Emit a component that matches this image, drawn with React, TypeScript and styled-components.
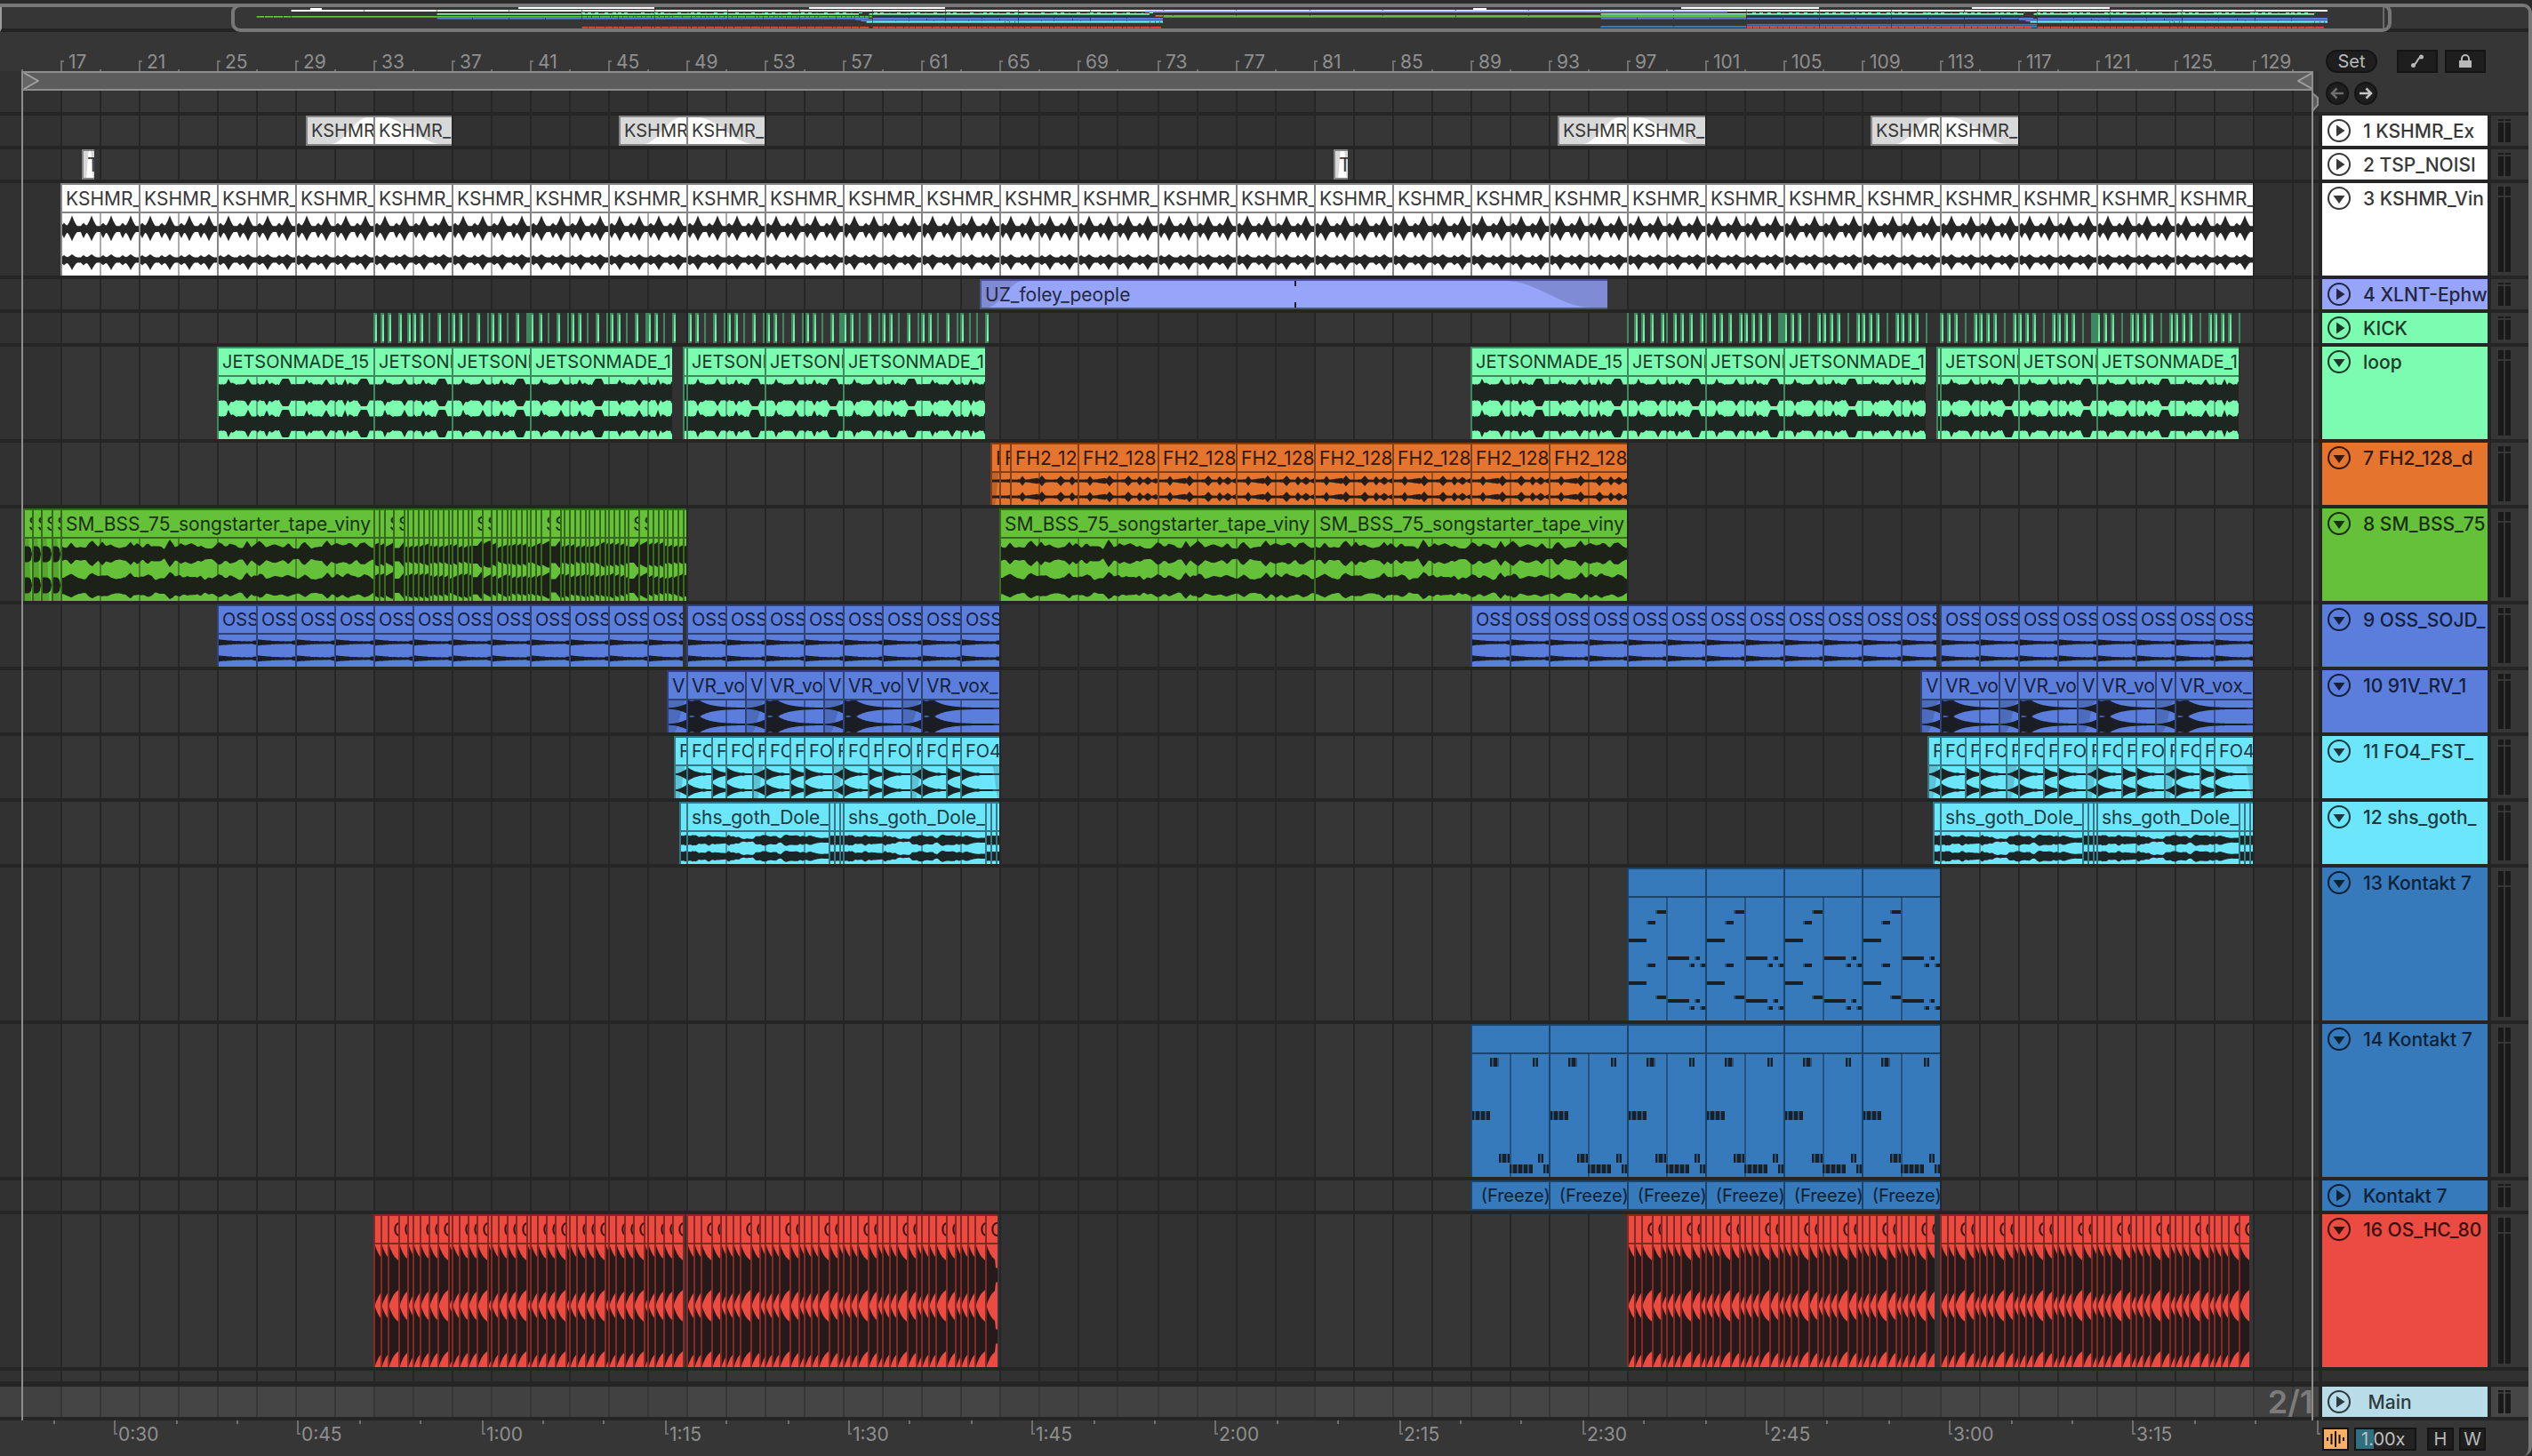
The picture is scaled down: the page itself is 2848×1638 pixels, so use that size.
import React from 'react';
import styled, { createGlobalStyle } from 'styled-components';

/* ---------- timeline scale ---------- */

const REPEAT = 1410;
const bar = (n: number) => 2 * Math.round((420 + (n - 33) * 22.025) / 2);
const range = (from: number, to: number, step: number) => {
  const out: number[] = [];
  for (let n = from; n <= to; n += step) out.push(n);
  return out;
};

/* ---------- types ---------- */

type Env = (x: number, ch: number, w: number, start: number) => [number, number];
type Fade = { in?: [number, number]; out?: [number, number] };
type Note = [number, number, number];
type ClipData = { x: number; end: number; name?: string; env?: Env; fade?: Fade; notes?: Note[] };
type Palette = { fill: string; edge: string; text: string; wave: string };
type TrackData = {
  name: string;
  height: number;
  folded?: boolean;
  compact?: boolean;
  color: Palette;
  clips: ClipData[];
  hits?: Hit[];
};
type Hit = { x: number; kind: 'hit' | 'mute' | 'wide' };

/* ---------- palettes ---------- */

const white: Palette = { fill: '#ffffff', edge: '#868686', text: '#383838', wave: '#262626' };
const lilac: Palette = { fill: '#96a4fa', edge: '#4d5588', text: '#23283f', wave: '#1d1f2b' };
const mint: Palette = { fill: '#7bfcb0', edge: '#3f875f', text: '#1a3a29', wave: '#1d2621' };
const orange: Palette = { fill: '#e5742e', edge: '#82401a', text: '#34190a', wave: '#261d18' };
const green: Palette = { fill: '#66c13a', edge: '#37691e', text: '#18300d', wave: '#1d2219' };
const blue: Palette = { fill: '#5b7edd', edge: '#2e4277', text: '#161f3a', wave: '#1b1d24' };
const cyan: Palette = { fill: '#6be6fb', edge: '#377783', text: '#17393f', wave: '#1c2526' };
const azure: Palette = { fill: '#367abb', edge: '#1a4469', text: '#0b2135', wave: '#1a2026' };
const red: Palette = { fill: '#ec4b42', edge: '#842924', text: '#380f0c', wave: '#251a19' };
const pale: Palette = { fill: '#b9dde8', edge: '#6d858c', text: '#2f3a3e', wave: '#1c2526' };

/* ---------- wave envelopes ---------- */

const hash = (n: number) => {
  const s = Math.sin(n * 127.1 + 11.7) * 43758.5453;
  return s - Math.floor(s);
};
const noise = (x: number, cell: number, seed: number) => {
  const p = x / cell;
  const i = Math.floor(p);
  const t = p - i;
  const a = hash(i + seed * 57);
  const b = hash(i + 1 + seed * 57);
  return a + (b - a) * t * t * (3 - 2 * t);
};
const bump = (x: number, at: number, half: number, height: number, flat = 0) => {
  const d = Math.max(0, Math.abs(x - at) - flat);
  return d >= half ? 0 : height * (1 - d / half);
};
const peaks = (x: number, list: number[][]) =>
  list.reduce((m, p) => Math.max(m, bump(x, p[0], p[1], p[2], p[3] || 0)), 0);
const curve = (x: number, keys: number[][]) => {
  for (let i = 1; i < keys.length; i += 1) {
    if (x <= keys[i][0]) {
      const t = (x - keys[i - 1][0]) / (keys[i][0] - keys[i - 1][0]);
      return keys[i - 1][1] + (keys[i][1] - keys[i - 1][1]) * t;
    }
  }
  return keys[keys.length - 1][1];
};

const vinylEnv: Env = (x, ch) => {
  const t = x % 22;
  const tall = Math.pow(peaks(t, [[11, 6, 1]]), 1.4);
  const low = Math.pow(peaks(t, [[2, 4, 1]]), 1.2);
  return ch === 0
    ? [3.3 + 12 * tall + 3.5 * low, 3.5 + 10.5 * tall + 7 * low]
    : [3 + 3.5 * tall + 2.5 * low, 3 + 8.5 * tall + 3 * low];
};
const loopEnv: Env = (x, ch) => {
  const t = x % 88;
  const p = peaks(t, [[11, 3, 6], [16, 3, 2], [33, 4, 6], [44, 2, 2], [54, 3, 6], [60, 3, 2], [75, 4, 7, 3]]);
  const base = (ch === 0 ? 8.5 : 7.5) + hash(x) * 1.2;
  const v = Math.min(15.5, base + p * (ch === 0 ? 1 : 1.2));
  return [v, v];
};
const drumEnv: Env = (x) => {
  const t = x % 88;
  const p = peaks(t, [[12, 3, 4], [34, 4, 4.5], [28, 12, 1.5], [55, 4, 4.5], [68, 3, 4], [77, 4, 3], [86, 3, 1.5]]);
  const v = 1.2 + hash(x) * 0.6 + p;
  return [v, v];
};
const vinySource = [
  [10, 8, 4], [34, 7, 8], [45, 6, 5], [54, 10, 3], [77, 6, 7], [84, 10, 4], [97, 8, 4], [121, 6, 9],
  [133, 7, 5], [145, 8, 4], [156, 5, 3], [176, 8, 6], [188, 9, 4], [208, 5, 8], [222, 9, 7], [236, 10, 4],
  [254, 6, 4], [273, 7, 6], [298, 6, 7], [309, 9, 6], [322, 10, 5], [340, 9, 7],
];
const tapeEnv: Env = (x, ch) => {
  const p = peaks(x, vinySource);
  const n = noise(x, 5, 3 + ch);
  return ch === 0 ? [6 + p + n * 3, 5 + p * 0.9 + n * 3] : [6 + p * 0.8 + n * 4, 8 + p * 0.7 + n * 3];
};
const sliceEnv: Env = (x, ch, w, start) => {
  const n = noise(start, 9, 5 + ch);
  const rise = w > 9 ? Math.max(0, x - w + 5) * 1.6 : x * 0.7;
  const v = (w > 9 ? 5.5 : 7) + n * 5 + rise * 0.8;
  return [Math.min(15, v), Math.min(15, v + 1)];
};
const headEnv: Env = (x, ch, w) => {
  const v = 9 * Math.sqrt(Math.max(0, 1 - Math.pow(x / w, 4)));
  return [v, v];
};
const tomEnv: Env = (x, ch, w) => {
  const v = 1 + 2.4 * Math.exp(-x / 16) + (x > w - 4 ? 1 : 0) + hash(x) * 0.5;
  return [v, v * 0.9];
};
const voxEnv: Env = (x) => {
  const v = x < 14 ? 8.2 + noise(x, 3, 9) * 1.4 : 0.8 + 7.6 * Math.exp(-(x - 14) / 13);
  return [v, v];
};
const voxRise: Env = (x, ch, w) => {
  const v = 0.8 + 4.4 * Math.pow(x / w, 2);
  return [v, v];
};
const snapEnv: Env = (x) => {
  const v = 0.8 + 6.5 * Math.exp(-x / 7) + noise(x, 3, 4) * 0.5 * (x < 20 ? 1 : 0);
  return [v, v];
};
const snapRise: Env = (x, ch, w) => {
  const v = 0.8 + 5 * Math.pow(x / w, 1.5);
  return [v, v];
};
const choirKeys = [
  [0, 4], [5, 6], [12, 3], [19, 3], [22, 5.5], [28, 4], [36, 4], [43, 3], [46, 5], [52, 3.5], [62, 1.5], [73, 1.5],
  [76, 4.5], [87, 5], [97, 4], [104, 2], [110, 5.5], [128, 4], [133, 3.5], [136, 5], [144, 3], [152, 1.8], [160, 1.5],
];
const choirEnv: Env = (x) => {
  const v = curve(x, choirKeys) + noise(x, 3, 2) * 1.8 - 0.6;
  return [v, v + 0.6];
};
const clapEnv: Env = (x) => {
  const v = 11.5 + 21.5 * Math.exp(-x / 7);
  return [v, v];
};
const clapTail: Env = (x, ch, w) => {
  const v = (11.5 + 21.5 * Math.exp(-x / 7)) * (x > w - 3 ? 0.5 : 1);
  return [v, v];
};

/* ---------- clip builders ---------- */

const chain = (points: number[], make: (x: number, end: number, i: number) => Partial<ClipData>): ClipData[] =>
  points.slice(0, -1).map((x, i) => ({ x, end: points[i + 1], ...make(x, points[i + 1], i) }));
const twice = (clips: ClipData[]) => [...clips, ...clips.map((c) => ({ ...c, x: c.x + REPEAT, end: c.end + REPEAT }))];
const fits = (x: number, end: number, name: string) => (end - x >= 10 ? name : '');

const shaker = (x: number, mid: number, end: number): ClipData[] => [
  { x, end: mid, name: 'KSHMR_', fade: { in: [68, 26] } },
  { x: mid, end, name: 'KSHMR_', fade: { out: [76, 12] } },
];

const loopLeft: ClipData[] = [
  ...chain([bar(25), bar(33), bar(37), bar(41), 756], () => ({ name: 'JETSONMADE_15', env: loopEnv })),
  ...chain([768, bar(49), bar(53), bar(57), 1108], (x) => ({ name: x === 768 ? '' : 'JETSONMADE_15', env: loopEnv })),
];

const tapeOffsets = [0, 6, 12, 22, 34, 38, 44, 50, 56, 62, 66, 72, 78, 84, 88, 94, 100, 106, 110, 122, 132, 138, 144, 150, 154, 160, 166, 172];
const tapeSlices = [...tapeOffsets.map((o) => 420 + o), ...tapeOffsets.map((o) => 596 + o), 772];

const voxPoints = [750, 772, 838, 860, 926, 948, 1014, 1036, 1124];
const snapPoints = [758, 772, 800, 816, 846, 860, 888, 904, 936, 948, 976, 992, 1024, 1036, 1064, 1080, 1124];
const choirPoints = [764, 772, 932, 938, 944, 948, 1108, 1114, 1120, 1124];

/* ---------- kick grid, shared by the clap track ---------- */

const h = (x: number): Hit => ({ x, kind: 'hit' });
const m = (x: number): Hit => ({ x, kind: 'mute' });
const wd = (x: number): Hit => ({ x, kind: 'wide' });

const steady = (base: number, blocks: number): Hit[] =>
  range(0, blocks - 1, 1).flatMap((k) => {
    const b = base + 44 * k;
    return [h(b), h(b + 8), m(b + 18), h(b + 28), m(b + 40)];
  });
const busy = (base: number, blocks: number): Hit[] =>
  range(0, blocks - 1, 1).flatMap((k) => {
    const b = base + 44 * k;
    return [h(b), h(b + 8), h(b + 16), m(b + 28), h(b + 38)];
  });

const kickA: Hit[] = [
  ...[0, 8, 16, 28, 38, 44, 52].map((o) => h(420 + o)),
  m(482), h(492), m(504),
  ...steady(508, 2), wd(592), ...steady(598, 3).slice(1), h(728), h(736), m(746), h(756),
];
const kickB: Hit[] = [...steady(774, 4), wd(944), ...steady(948, 3).slice(1), h(1080), m(1090), m(1098), h(1108)];
const kickC: Hit[] = [
  m(1830),
  ...[8, 16, 26, 38].map((o) => h(1830 + o)), m(1874),
  ...[52, 60, 70, 82].map((o) => h(1830 + o)), m(1918),
  ...[96, 104, 114, 126, 132, 140, 148, 158].map((o) => h(1830 + o)),
  wd(2000), h(2006), h(2014), h(2022), m(2034), h(2044),
  h(2050), h(2058), h(2066), m(2078), h(2088),
  h(2094), h(2102), h(2110), m(2122), h(2132), h(2138), h(2146), h(2154), m(2166),
];
const kickD: Hit[] = [...busy(2182, 4).slice(0, -1), wd(2352), ...busy(2358, 3), h(2490), h(2498), h(2506), m(2518)];

const clapLeftA = [420, 428, 436, 448, 458, 464, 472, 482, 492, 504, ...range(0, 5, 1).flatMap((k) => [0, 8, 18, 28, 40].map((o) => 508 + 44 * k + o)), 768];
const clapBlocks = (base: number, end: number) => [
  ...range(0, 7, 1).flatMap((k) => [0, 8, 16, 28, 38].map((o) => base + 44 * k + o)).slice(0, -1),
  end,
];
const clap = (points: number[], tail: boolean) =>
  chain(points, (x, end, i) => ({ name: fits(x, end, 'OS'), env: tail && i === points.length - 2 ? clapTail : clapEnv }));

/* ---------- midi notes: [x, y, width] ---------- */

const melody: Note[] = [
  [30, 14, 12], [20, 26, 10], [0, 46, 20], [42, 66, 26], [74, 66, 6], [20, 74, 10], [68, 74, 6], [80, 74, 6],
  [0, 94, 20], [30, 110, 12], [42, 114, 26], [74, 114, 6], [68, 122, 6], [80, 122, 6],
];
const chords: Note[] = [[20, 4, 10], [68, 4, 6], [0, 64, 20], [30, 112, 12], [74, 112, 6], [42, 124, 26], [80, 124, 6]];

/* ---------- tracks ---------- */

const tracks: TrackData[] = [
  {
    name: '1 KSHMR_Ex', height: 34, folded: true, compact: true, color: white,
    clips: [...shaker(344, 420, 508), ...shaker(696, 772, 860), ...shaker(1752, 1830, 1918), ...shaker(2104, 2182, 2270)],
  },
  {
    name: '2 TSP_NOISI', height: 34, folded: true, color: white,
    clips: [
      { x: 92, end: 106, name: 'TSP', fade: { in: [6, 3], out: [4, 1] } },
      { x: 1500, end: 1516, name: 'TSP', fade: { in: [6, 3], out: [4, 1] } },
    ],
  },
  {
    name: '3 KSHMR_Vin', height: 104, color: white,
    clips: chain(range(17, 129, 4).map(bar), () => ({ name: 'KSHMR_', env: vinylEnv })),
  },
  {
    name: '4 XLNT-Ephw', height: 34, folded: true, color: lilac,
    clips: [{ x: 1102, end: 1808, name: 'UZ_foley_people', fade: { in: [46, 6], out: [114, 18] } }],
  },
  { name: 'KICK', height: 34, folded: true, color: mint, clips: [], hits: [...kickA, ...kickB, ...kickC, ...kickD] },
  { name: 'loop', height: 104, compact: true, color: mint, clips: twice(loopLeft) },
  {
    name: '7 FH2_128_d', height: 70, color: orange,
    clips: chain([1114, 1124, 1136, ...range(69, 97, 4).map(bar)], (x) => ({ name: 'FH2_128', env: drumEnv, fade: x === 1114 ? { in: [8, 3] } : undefined })),
  },
  {
    name: '8 SM_BSS_75', height: 104, color: green,
    clips: [
      ...chain([26, 36, 46, 58, 68], () => ({ name: 'SM', env: headEnv, fade: { in: [4, 8] as [number, number] } })),
      { x: 68, end: 420, name: 'SM_BSS_75_songstarter_tape_viny', env: tapeEnv },
      ...chain(tapeSlices, (x, end) => ({ name: fits(x, end, 'SM'), env: sliceEnv })),
      ...chain([bar(65), bar(81), bar(97)], () => ({ name: 'SM_BSS_75_songstarter_tape_viny', env: tapeEnv })),
    ],
  },
  {
    name: '9 OSS_SOJD_', height: 70, compact: true, color: blue,
    clips: twice([
      ...chain([...range(25, 47, 2).map(bar), 768], () => ({ name: 'OSS', env: tomEnv })),
      ...chain(range(49, 65, 2).map(bar), () => ({ name: 'OSS', env: tomEnv })),
    ]),
  },
  {
    name: '10 91V_RV_1', height: 70, color: blue,
    clips: twice(chain(voxPoints, (x, e, i) => ({ name: i === 7 ? 'VR_vox_' : i % 2 ? 'VR_vo' : 'VR', env: i % 2 ? voxEnv : voxRise, fade: i % 2 ? undefined : { in: [20, 6] } }))),
  },
  {
    name: '11 FO4_FST_', height: 70, compact: true, color: cyan,
    clips: twice(
      chain(snapPoints, (x, e, i) => ({
        name: i === 15 ? 'FO4' : 'FO',
        env: i % 4 ? snapEnv : snapRise,
        fade: i === 15 ? { out: [8, 1] } : i % 4 ? undefined : { in: [11, 4] },
      })),
    ),
  },
  {
    name: '12 shs_goth_', height: 70, color: cyan,
    clips: twice(chain(choirPoints, (x, e) => ({ name: e - x > 20 ? 'shs_goth_Dole_' : '', env: choirEnv }))),
  },
  { name: '13 Kontakt 7', height: 172, color: azure, clips: chain(range(97, 113, 4).map(bar), () => ({ notes: melody })) },
  { name: '14 Kontakt 7', height: 172, color: azure, clips: chain(range(89, 113, 4).map(bar), () => ({ notes: chords })) },
  { name: 'Kontakt 7', height: 34, folded: true, compact: true, color: azure, clips: chain(range(89, 113, 4).map(bar), () => ({ name: '\u00a0(Freeze)' })) },
  {
    name: '16 OS_HC_80', height: 172, color: red,
    clips: [
      ...clap(clapLeftA, false),
      ...clap(clapBlocks(772, 1122), true),
      ...clap(clapBlocks(1830, 2176), false),
      ...clap(clapBlocks(2182, 2530), false),
    ],
  },
];

/* ---------- styles ---------- */

const Global = createGlobalStyle`
  * { box-sizing: border-box; }
  body { margin: 0; background: #2a2a2a; font-family: Inter, "Liberation Sans", sans-serif; font-size: 20px; color: #8f8f8f; }
  button, input { font: inherit; color: inherit; margin: 0; padding: 0; }
`;
const Page = styled.main`
  min-height: 100vh;
  padding-top: 4px;
  display: flex;
  flex-direction: column;
`;
const Frame = styled.div`
  flex: 1;
  display: flex;
  flex-direction: column;
  overflow: hidden;
  background: #363636;
  border-top: 4px solid #777777;
  border-right: 4px solid #777777;
  border-radius: 0 10px 10px 0;
`;
const OverviewBar = styled.div`
  position: relative;
  height: 28px;
  border-bottom: 4px solid #232323;
  border-left: 2px solid #9a9a9a;
  background: #363636;
  svg { display: block; margin-left: -2px; }
`;
const ViewWindow = styled.div`
  position: absolute;
  top: -4px;
  bottom: -4px;
  left: 258px;
  right: 154px;
  border: 4px solid #777777;
  border-radius: 10px;
`;
const Arrangement = styled.div`
  position: relative;
  overflow: hidden;
`;
const HeadRow = styled.div`
  position: relative;
  display: flex;
  border-bottom: 4px solid #252525;
`;
const HeadLanes = styled.div`
  flex: 1;
  min-width: 0;
  overflow: hidden;
`;
const BarRuler = styled.div`
  position: relative;
  height: 44px;
  background: #363636;
`;
const Tick = styled.div<{ $major: boolean }>`
  position: absolute;
  bottom: 0;
  width: 4px;
  height: ${(p) => (p.$major ? 12 : 2)}px;
  border-left: 2px solid #6f6f6f;
  border-top: ${(p) => (p.$major ? '2px solid #6f6f6f' : '0')};
`;
const RulerLabel = styled.span`
  position: absolute;
  top: 20px;
  font-size: 21px;
  line-height: 28px;
`;
const Brace = styled.div`
  display: flex;
  justify-content: space-between;
  height: 22px;
  margin: 0 6px 0 26px;
  background: #5c5c5c;
  border: solid #8e8e8e;
  border-width: 2px 0;
  svg { display: block; }
`;
const Scrub = styled.div`
  display: flex;
  justify-content: flex-end;
  height: 24px;
`;
const Tools = styled.div`
  flex: 0 0 236px;
  padding: 20px 0 0 8px;
  display: flex;
  flex-direction: column;
  gap: 10px;
  background: #363636;
`;
const ToolRow = styled.div`
  display: flex;
  gap: 8px;
`;
const ToolButton = styled.button<{ $w: number; $round?: boolean; $after?: number }>`
  width: ${(p) => p.$w}px;
  height: 26px;
  margin-right: ${(p) => p.$after || 0}px;
  display: flex;
  align-items: center;
  justify-content: center;
  background: #1e1e1e;
  border: 2px solid #141414;
  border-radius: ${(p) => (p.$round ? 13 : 0)}px;
  color: #b8b8b8;
  line-height: 22px;
`;
const NavRow = styled(ToolRow)`
  gap: 6px;
`;
const GridLayer = styled.svg`
  position: absolute;
  inset: 44px 0 0 0;
  width: 100%;
  height: 100%;
`;
const Row = styled.section<{ $h: number; $gap?: number }>`
  position: relative;
  display: flex;
  height: ${(p) => p.$h + (p.$gap || 4)}px;
  border-bottom: ${(p) => p.$gap || 4}px solid #252525;
`;
const Lane = styled.div<{ $lit?: boolean }>`
  position: relative;
  flex: 1;
  min-width: 0;
  overflow: hidden;
  background: ${(p) => (p.$lit ? 'rgba(255, 255, 255, 0.08)' : 'transparent')};
`;
const Signature = styled.div`
  text-align: right;
  padding-right: 6px;
  font-size: 36px;
  font-weight: 600;
  line-height: 34px;
  color: #7c7c7c;
`;
const TrackHead = styled.header<{ $c: Palette }>`
  flex: 0 0 194px;
  display: flex;
  align-items: flex-start;
  gap: 14px;
  padding: 4px 0 0 6px;
  border: solid #252525;
  border-width: 0 4px;
  background: ${(p) => p.$c.fill};
  color: ${(p) => p.$c.text};
`;
const TrackName = styled.h2`
  margin: 0;
  font-size: 21px;
  font-weight: 500;
  line-height: 28px;
  white-space: nowrap;
`;
const FoldButton = styled.button`
  flex: 0 0 26px;
  height: 26px;
  border: 0;
  background: none;
  svg { display: block; }
`;
const MeterBox = styled.div<{ $lit?: boolean }>`
  flex: 0 0 42px;
  display: flex;
  gap: 2px;
  padding: 4px 0 4px 8px;
  background: ${(p) => (p.$lit ? '#464646' : '#363636')};
`;
const MeterBar = styled.div<{ $cap: number }>`
  width: 6px;
  background: linear-gradient(#191919 ${(p) => p.$cap}px, #363636 ${(p) => p.$cap}px ${(p) => p.$cap + 2}px, #191919 ${(p) => p.$cap + 2}px);
`;
const EmptyHead = styled.div`
  flex: 0 0 236px;
  border-left: 4px solid #252525;
`;

const ClipBox = styled.article<{ $c: Palette; $folded?: boolean }>`
  position: absolute;
  top: 0;
  bottom: 0;
  overflow: hidden;
  background: ${(p) => p.$c.fill};
  color: ${(p) => p.$c.text};
  border: solid ${(p) => p.$c.edge};
  border-width: 2px 0 ${(p) => (p.$folded ? 2 : 0)}px 2px;
`;
const ClipTitle = styled.div<{ $c: Palette; $folded?: boolean; $compact?: boolean }>`
  position: relative;
  height: ${(p) => (p.$folded ? 30 : 32)}px;
  padding-left: 4px;
  font-size: ${(p) => (p.$compact ? 20 : 21)}px;
  line-height: ${(p) => (p.$compact ? 30 : 32)}px;
  white-space: nowrap;
  overflow: hidden;
  border-bottom: ${(p) => (p.$folded ? '0' : `2px solid ${p.$c.edge}`)};
`;
const BodyArt = styled.svg`
  display: block;
`;
const FadeArt = styled.svg`
  position: absolute;
  top: 0;
  left: 0;
`;
const KickHit = styled.i<{ $kind: Hit['kind'] }>`
  position: absolute;
  top: 0;
  bottom: 0;
  width: ${(p) => (p.$kind === 'mute' ? 2 : p.$kind === 'wide' ? 8 : 4)}px;
  background: linear-gradient(#66d795, #7bfcb0);
  border: solid #3f875f;
  border-width: 2px 0 2px ${(p) => (p.$kind === 'wide' ? 6 : 2)}px;
`;
const EdgeLine = styled.div<{ $top: number }>`
  position: absolute;
  top: ${(p) => p.$top}px;
  bottom: 0;
  width: 2px;
  background: #8e8e8e;
`;
const StartLine = styled(EdgeLine)`
  left: 24px;
`;
const EndLine = styled(EdgeLine)`
  right: 242px;
`;
const Footer = styled.footer`
  flex: 1;
  display: flex;
  min-height: 40px;
`;
const TimeRuler = styled.div`
  position: relative;
  flex: 1;
  overflow: hidden;
`;
const TimeTick = styled.div<{ $major: boolean }>`
  position: absolute;
  top: 0;
  width: 4px;
  height: ${(p) => (p.$major ? 16 : 4)}px;
  border-left: 2px solid #6f6f6f;
  border-bottom: ${(p) => (p.$major ? '2px solid #6f6f6f' : '0')};
`;
const TimeLabel = styled.span`
  position: absolute;
  top: 2px;
  font-size: 21px;
  line-height: 28px;
`;
const Transport = styled.div`
  flex: 0 0 232px;
  display: flex;
  gap: 6px;
  padding-top: 8px;
`;
const WaveButton = styled(ToolButton)`
  background: #f6b066;
  color: #1a1208;
`;
const SpeedField = styled.input`
  width: 70px;
  height: 26px;
  margin-right: 6px;
  padding-left: 6px;
  border: 2px solid #141414;
  background: linear-gradient(to right, #2f6f80 20px, #232323 20px);
  color: #c0c0c0;
`;

/* ---------- drawing parts ---------- */

function wavePath(env: Env, ch: number, w: number, start: number, mid: number) {
  let top = '';
  let bottom = '';
  for (let x = 0; x <= w; x += 1) {
    const [u, d] = env(x, ch, w, start);
    top += `${x ? 'L' : 'M'}${x} ${(mid - u).toFixed(1)}`;
    bottom = `L${x} ${(mid + d).toFixed(1)}` + bottom;
  }
  return top + bottom + 'Z';
}

function FadeShade({ fade, w, h: ht }: { fade: Fade; w: number; h: number }) {
  const side = (edge: number, t: number, b: number) => {
    const c1 = t + (b - t) * 0.35;
    const c2 = t + (b - t) * 0.65;
    return `M${edge} 0H${t}C${c1} 0 ${c2} ${ht} ${b} ${ht}H${edge}Z`;
  };
  const d = (fade.in ? side(0, fade.in[0], fade.in[1]) : '') + (fade.out ? side(w, w - fade.out[0], w - fade.out[1]) : '');
  return <path d={d} fill="#000000" fillOpacity={0.15} />;
}

function Clip({ clip, track }: { clip: ClipData; track: TrackData }) {
  const w = clip.end - clip.x - 2;
  const c = track.color;
  const bodyH = track.height - 34;
  const inner = range(15, 131, 2).map(bar).filter((x) => x > clip.x + 2 && x < clip.end - 2);
  const noteH = clip.notes === chords ? 10 : 4;
  return (
    <ClipBox $c={c} $folded={track.folded} style={{ left: clip.x, width: clip.end - clip.x }}>
      {track.folded && clip.fade && (
        <FadeArt width={w} height={30}>
          <FadeShade fade={clip.fade} w={w} h={30} />
          {w > 400 && <path d="M353 0v6M353 24v6" stroke={c.wave} strokeWidth={2} />}
        </FadeArt>
      )}
      <ClipTitle $c={c} $folded={track.folded} $compact={track.compact}>{clip.name}</ClipTitle>
      {!track.folded && (
        <BodyArt width={w} height={bodyH}>
          {clip.fade && <FadeShade fade={clip.fade} w={w} h={bodyH} />}
          {inner.map((x) => (
            <rect key={x} x={x - clip.x - 2} y={0} width={2} height={bodyH} fill={c.edge} fillOpacity={0.7} />
          ))}
          {clip.env && [0, 1].map((ch) => (
            <path key={ch} d={wavePath(clip.env!, ch, w, clip.x, (bodyH * (1 + 2 * ch)) / 4)} fill={c.wave} />
          ))}
          {clip.notes && clip.notes.map(([x, y, nw], i) => (
            <g key={i}>
              <rect x={x} y={y} width={nw} height={noteH} fill={c.wave} />
              {noteH === 4 && x > 0 && <rect x={x} y={y} width={2} height={4} fill="#22547f" />}
              {noteH === 10 && range(2, nw - 2, 6).map((s) => (
                <rect key={s} x={x + s} y={y} width={2} height={10} fill="#22547f" />
              ))}
            </g>
          ))}
        </BodyArt>
      )}
    </ClipBox>
  );
}

function Fold({ folded, color, name }: { folded?: boolean; color: string; name: string }) {
  return (
    <FoldButton aria-label={`${folded ? 'Unfold' : 'Fold'} ${name}`}>
      <svg width="26" height="26" viewBox="0 0 26 26">
        <circle cx="13" cy="13" r="12" fill="none" stroke={color} strokeWidth="2" />
        <path d={folded ? 'M10 6.5V19.5L19.5 13Z' : 'M6.5 10H19.5L13 19Z'} fill={color} />
      </svg>
    </FoldButton>
  );
}

function Meters({ height, lit }: { height: number; lit?: boolean }) {
  const cap = height < 40 ? 2 : height < 80 ? 6 : height < 120 ? 10 : 16;
  return (
    <MeterBox $lit={lit}>
      <MeterBar $cap={cap} />
      <MeterBar $cap={cap} />
    </MeterBox>
  );
}

function Track({ track }: { track: TrackData }) {
  return (
    <Row $h={track.height}>
      <Lane>
        {track.clips.map((c) => <Clip key={c.x} clip={c} track={track} />)}
        {track.hits && track.hits.map((k, i) => <KickHit key={i} $kind={k.kind} style={{ left: k.x }} />)}
      </Lane>
      <TrackHead $c={track.color}>
        <Fold folded={track.folded} color={track.color.text} name={track.name} />
        <TrackName>{track.name}</TrackName>
      </TrackHead>
      <Meters height={track.height} />
    </Row>
  );
}

function Grid() {
  return (
    <GridLayer shapeRendering="crispEdges">
      <rect width={2608} height="100%" fill="#363636" />
      {[1, 33, 65, 97, 129].map((b) => (
        <rect key={b} x={bar(b)} width={bar(b + 16) - bar(b)} height="100%" fill="#313131" />
      ))}
      {range(17, 131, 2).map((b) => <rect key={b} x={bar(b)} width={2} height="100%" fill="#262626" />)}
    </GridLayer>
  );
}

/* Rows of the overview strip: top and height of each track. */
const overviewRows: [number, number][] = [
  [0, 2], [1, 2], [3, 2], [4, 2], [6, 2], [7, 2], [9, 2], [10, 2], [12, 2], [13, 2], [15, 1], [16, 2], [19, 2], [21, 2], [22, 1], [22, 2],
];

function Overview() {
  const ox = (x: number) => Math.round(327 + (x - 68) * 0.929);
  return (
    <svg width="100%" height={24} shapeRendering="crispEdges">
      {tracks.map((t, i) => {
        const [y, ht] = overviewRows[i];
        return (
          <g key={t.name}>
            {t.clips.map((c) => {
              const w = Math.max(1, ox(c.end) - ox(c.x));
              return (
                <g key={c.x}>
                  <rect x={ox(c.x)} y={y} width={w} height={ht} fill={t.color.fill} />
                  {!t.folded && <rect x={ox(c.x)} y={y} width={1} height={ht} fill={t.color.edge} />}
                  {!t.folded && i !== 2 && <rect x={ox(c.x)} y={y + ht - 1} width={w} height={1} fill={t.color.edge} fillOpacity={0.5} />}
                </g>
              );
            })}
            {t.hits && t.hits.map((k, n) => (
              <rect key={n} x={ox(k.x)} y={y} width={k.kind === 'mute' ? 2 : 4} height={1} fill={k.kind === 'mute' ? t.color.edge : t.color.fill} />
            ))}
          </g>
        );
      })}
      <rect x={2680} y={0} width={2} height={24} fill="#6a6a6a" />
    </svg>
  );
}

const clock = (s: number) => `${Math.floor(s / 60)}:${String(s % 60).padStart(2, '0')}`;
const timeX = (s: number) => 2 * Math.round((541 + (s - 60) * 13.76) / 2);

export default function App() {
  return (
    <Page>
      <Global />
      <Frame>
        <OverviewBar>
          <Overview />
          <ViewWindow />
        </OverviewBar>
        <Arrangement>
          <Grid />
          <HeadRow>
            <HeadLanes>
              <BarRuler>
                {range(15, 131, 2).map((b) => <Tick key={b} $major={b % 4 === 1} style={{ left: bar(b) }} />)}
                {range(17, 129, 4).map((b) => <RulerLabel key={b} style={{ left: bar(b) + 9 }}>{b}</RulerLabel>)}
              </BarRuler>
              <Brace>
                <svg width="18" height="18"><path d="M1 0L17 9L1 18" fill="#666666" stroke="#a0a0a0" strokeWidth="2" /></svg>
                <svg width="18" height="18"><path d="M17 0L1 9L17 18" fill="#666666" stroke="#a0a0a0" strokeWidth="2" /></svg>
              </Brace>
              <Scrub>
                <svg width="8" height="24"><path d="M0 2L7 8V16L0 24" fill="#5c5c5c" stroke="#8e8e8e" strokeWidth="2" /></svg>
              </Scrub>
            </HeadLanes>
            <Tools>
              <ToolRow>
                <ToolButton $w={58} $round $after={14}>Set</ToolButton>
                <ToolButton $w={46} aria-label="Automation mode">
                  <svg width="20" height="20" viewBox="0 0 20 20">
                    <path d="M5 14C10 14 10 5 14.5 5" fill="none" stroke="#b8b8b8" strokeWidth="2" />
                    <circle cx="5.5" cy="14.5" r="2.5" fill="#b8b8b8" />
                    <circle cx="14.5" cy="5" r="2.5" fill="#b8b8b8" />
                  </svg>
                </ToolButton>
                <ToolButton $w={46} aria-label="Lock envelopes">
                  <svg width="18" height="18" viewBox="0 0 18 18">
                    <path d="M5 9V6a4 4 0 0 1 8 0v3" fill="none" stroke="#b8b8b8" strokeWidth="2" />
                    <rect x="2" y="8" width="14" height="8" fill="#b8b8b8" />
                  </svg>
                </ToolButton>
              </ToolRow>
              <NavRow>
                <ToolButton $w={26} $round aria-label="Previous locator">
                  <svg width="16" height="14" viewBox="0 0 16 14"><path d="M15 7H2M7.5 1.5L2 7L7.5 12.5" fill="none" stroke="#6e6e6e" strokeWidth="2.5" /></svg>
                </ToolButton>
                <ToolButton $w={26} $round aria-label="Next locator">
                  <svg width="16" height="14" viewBox="0 0 16 14"><path d="M1 7H14M8.5 1.5L14 7L8.5 12.5" fill="none" stroke="#c4c4c4" strokeWidth="2.5" /></svg>
                </ToolButton>
              </NavRow>
            </Tools>
          </HeadRow>
          {tracks.map((t) => <Track key={t.name} track={t} />)}
          <Row $h={12} $gap={6}>
            <Lane />
            <EmptyHead />
          </Row>
          <Row $h={34}>
            <Lane $lit><Signature>2/1</Signature></Lane>
            <TrackHead $c={pale}>
              <Fold folded color={pale.text} name="Main" />
              <TrackName>&nbsp;Main</TrackName>
            </TrackHead>
            <Meters height={34} lit />
          </Row>
          <StartLine $top={44} />
          <EndLine $top={44} />
        </Arrangement>
        <Footer>
          <TimeRuler>
            {range(25, 210, 5).map((s) => <TimeTick key={s} $major={s % 15 === 0} style={{ left: timeX(s) }} />)}
            {range(30, 195, 15).map((s) => <TimeLabel key={s} style={{ left: timeX(s) + 5 }}>{clock(s)}</TimeLabel>)}
          </TimeRuler>
          <Transport>
            <WaveButton $w={30} aria-label="Follow waveform">
              <svg width="22" height="20" viewBox="0 0 22 20">
                <path d="M2 8v4M6.5 4v12M11 1v18M15.5 5v10M20 8v4" stroke="#1a1208" strokeWidth="2" />
              </svg>
            </WaveButton>
            <SpeedField aria-label="Playback speed" defaultValue="1.00x" />
            <ToolButton $w={30}>H</ToolButton>
            <ToolButton $w={30}>W</ToolButton>
          </Transport>
        </Footer>
      </Frame>
    </Page>
  );
}
